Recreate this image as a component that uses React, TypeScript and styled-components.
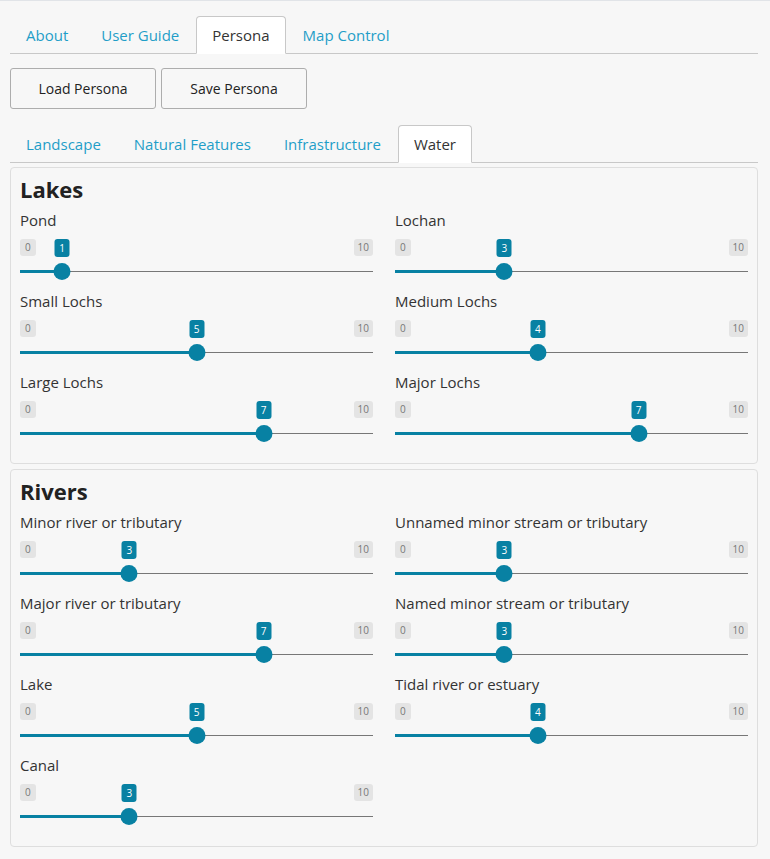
import React from "react";
import styled, { createGlobalStyle } from "styled-components";

const GlobalStyle = createGlobalStyle`
  html, body {
    margin: 0;
    padding: 0;
    background: #f7f7f7;
  }
  body {
    border-top: 1px solid #e1e4e8;
    font-family: "Open Sans", "DejaVu Sans", sans-serif;
    color: #333;
  }
`;

const TEAL = "#0881a3";
const LINK = "#1f9ec8";

const Page = styled.div`
  width: 748px;
  padding: 15px 12px 0 10px;
`;

const TabNav = styled.div`
  display: flex;
  border-bottom: 1px solid #c8c8c8;
  height: 37px;
`;

const Tab = styled.div<{ $active?: boolean }>`
  box-sizing: border-box;
  height: 38px;
  display: flex;
  align-items: center;
  padding: 0 15px 1px;
  margin-right: 1px;
  border: 1px solid ${(p) => (p.$active ? "#c8c8c8" : "transparent")};
  border-bottom-color: ${(p) => (p.$active ? "#fff" : "transparent")};
  border-radius: 4px 4px 0 0;
  background: ${(p) => (p.$active ? "#fff" : "transparent")};
  color: ${(p) => (p.$active ? "#333" : LINK)};
  font-size: 15px;
  line-height: 18px;
  cursor: pointer;
`;

const ButtonRow = styled.div`
  display: flex;
  gap: 5px;
  margin: 14px 0 16px;
`;

const Button = styled.button`
  box-sizing: border-box;
  width: 146px;
  height: 41px;
  border: 1px solid #adadad;
  border-radius: 3px;
  background: #f7f7f7;
  color: #222;
  font-family: "Open Sans", "DejaVu Sans", sans-serif;
  font-size: 14px;
  padding: 0;
`;

const Panel = styled.section`
  box-sizing: border-box;
  border: 1px solid #dedede;
  border-radius: 4px;
  background: #f7f7f7;
  padding: 8px 9px 20px;
  margin-bottom: 5px;
`;

const PanelFirst = styled(Panel)`
  margin-top: 4px;
`;

const Heading = styled.h3`
  margin: 0 0 9px;
  font-size: 22px;
  line-height: 26px;
  font-weight: 700;
  color: #222;
`;

const Grid = styled.div`
  display: grid;
  grid-template-columns: 353px 353px;
  column-gap: 22px;
  row-gap: 11px;
`;

const Item = styled.div`
  display: flex;
  flex-direction: column;
`;

const Label = styled.div`
  font-size: 15px;
  line-height: 18px;
  color: #333;
`;

const Track = styled.div`
  position: relative;
  height: 52px;
`;

const Badge = styled.span`
  position: absolute;
  top: 10px;
  height: 17px;
  line-height: 17px;
  padding: 0 5px;
  border-radius: 3px;
  font-size: 10px;
  background: #e4e4e4;
  color: #777;
`;

const MinBadge = styled(Badge)`
  left: 0;
`;

const MaxBadge = styled(Badge)`
  right: 0;
  padding: 0 4px;
`;

const ValueBadge = styled(Badge)`
  background: ${TEAL};
  color: #fff;
  padding: 0 4px;
  min-width: 7px;
  text-align: center;
  transform: translateX(-50%);
  height: 18px;
  line-height: 18px;
`;

const Line = styled.div`
  position: absolute;
  left: 0;
  right: 0;
  top: 42px;
  height: 1px;
  background: #777;
`;

const Fill = styled.div`
  position: absolute;
  left: 0;
  top: 41px;
  height: 3px;
  background: ${TEAL};
`;

const Handle = styled.div`
  position: absolute;
  top: 34px;
  width: 17px;
  height: 17px;
  border-radius: 50%;
  background: ${TEAL};
  transform: translateX(-50%);
`;

const WIDTH = 353;
const HW = 17;

function Slider({ label, value }: { label: string; value: number }) {
  const cx = HW / 2 + ((WIDTH - HW) * value) / 10;
  return (
    <Item>
      <Label>{label}</Label>
      <Track>
        <MinBadge>0</MinBadge>
        <MaxBadge>10</MaxBadge>
        <ValueBadge style={{ left: cx }}>{value}</ValueBadge>
        <Line />
        <Fill style={{ width: cx }} />
        <Handle style={{ left: cx }} />
      </Track>
    </Item>
  );
}

const lakes: [string, number][] = [
  ["Pond", 1],
  ["Lochan", 3],
  ["Small Lochs", 5],
  ["Medium Lochs", 4],
  ["Large Lochs", 7],
  ["Major Lochs", 7],
];

const rivers: [string, number][] = [
  ["Minor river or tributary", 3],
  ["Unnamed minor stream or tributary", 3],
  ["Major river or tributary", 7],
  ["Named minor stream or tributary", 3],
  ["Lake", 5],
  ["Tidal river or estuary", 4],
  ["Canal", 3],
];

export default function App() {
  return (
    <>
      <GlobalStyle />
      <Page>
        <TabNav>
          <Tab>About</Tab>
          <Tab>User Guide</Tab>
          <Tab $active>Persona</Tab>
          <Tab>Map Control</Tab>
        </TabNav>
        <ButtonRow>
          <Button>Load Persona</Button>
          <Button>Save Persona</Button>
        </ButtonRow>
        <TabNav>
          <Tab>Landscape</Tab>
          <Tab>Natural Features</Tab>
          <Tab>Infrastructure</Tab>
          <Tab $active>Water</Tab>
        </TabNav>
        <PanelFirst>
          <Heading>Lakes</Heading>
          <Grid>
            {lakes.map(([l, v]) => (
              <Slider key={l} label={l} value={v} />
            ))}
          </Grid>
        </PanelFirst>
        <Panel>
          <Heading>Rivers</Heading>
          <Grid>
            {rivers.map(([l, v]) => (
              <Slider key={l} label={l} value={v} />
            ))}
          </Grid>
        </Panel>
      </Page>
    </>
  );
}
